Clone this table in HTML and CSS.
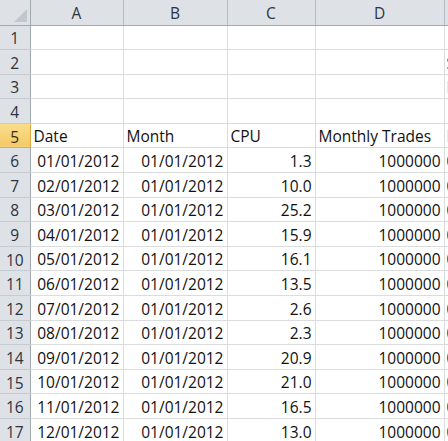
FILE: index.html
```html
<!DOCTYPE html>
<html>
<head>
<meta charset="utf-8">
<link rel="stylesheet" href="styles.css">
</head>
<body class="xl-page">
<table class="xl-sheet">
  <colgroup>
    <col class="xl-w0"><col class="xl-wa"><col class="xl-wb"><col class="xl-wc"><col class="xl-wd"><col class="xl-we">
  </colgroup>
  <thead>
    <tr class="xl-headrow">
      <th class="xl-corner"><span class="xl-tri"></span></th>
      <th class="xl-colhead">A</th>
      <th class="xl-colhead">B</th>
      <th class="xl-colhead">C</th>
      <th class="xl-colhead">D</th>
      <th class="xl-colhead"></th>
    </tr>
  </thead>
  <tbody>
    <tr><th class="xl-rowhead">1</th><td></td><td></td><td></td><td></td><td class="xl-e"></td></tr>
    <tr><th class="xl-rowhead">2</th><td></td><td></td><td></td><td></td><td class="xl-e">S</td></tr>
    <tr><th class="xl-rowhead">3</th><td></td><td></td><td></td><td></td><td class="xl-e">P</td></tr>
    <tr><th class="xl-rowhead">4</th><td></td><td></td><td></td><td></td><td class="xl-e"></td></tr>
    <tr><th class="xl-rowhead xl-sel">5</th><td class="xl-l">Date</td><td class="xl-l">Month</td><td class="xl-l">CPU</td><td class="xl-l">Monthly Trades</td><td class="xl-e">P</td></tr>
    <tr><th class="xl-rowhead">6</th><td>01/01/2012</td><td>01/01/2012</td><td>1.3</td><td>1000000</td><td class="xl-e">0</td></tr>
    <tr><th class="xl-rowhead">7</th><td>02/01/2012</td><td>01/01/2012</td><td>10.0</td><td>1000000</td><td class="xl-e">0</td></tr>
    <tr><th class="xl-rowhead">8</th><td>03/01/2012</td><td>01/01/2012</td><td>25.2</td><td>1000000</td><td class="xl-e">0</td></tr>
    <tr><th class="xl-rowhead">9</th><td>04/01/2012</td><td>01/01/2012</td><td>15.9</td><td>1000000</td><td class="xl-e">0</td></tr>
    <tr><th class="xl-rowhead">10</th><td>05/01/2012</td><td>01/01/2012</td><td>16.1</td><td>1000000</td><td class="xl-e">0</td></tr>
    <tr><th class="xl-rowhead">11</th><td>06/01/2012</td><td>01/01/2012</td><td>13.5</td><td>1000000</td><td class="xl-e">0</td></tr>
    <tr><th class="xl-rowhead">12</th><td>07/01/2012</td><td>01/01/2012</td><td>2.6</td><td>1000000</td><td class="xl-e">0</td></tr>
    <tr><th class="xl-rowhead">13</th><td>08/01/2012</td><td>01/01/2012</td><td>2.3</td><td>1000000</td><td class="xl-e">0</td></tr>
    <tr><th class="xl-rowhead">14</th><td>09/01/2012</td><td>01/01/2012</td><td>20.9</td><td>1000000</td><td class="xl-e">0</td></tr>
    <tr><th class="xl-rowhead">15</th><td>10/01/2012</td><td>01/01/2012</td><td>21.0</td><td>1000000</td><td class="xl-e">0</td></tr>
    <tr><th class="xl-rowhead">16</th><td>11/01/2012</td><td>01/01/2012</td><td>16.5</td><td>1000000</td><td class="xl-e">0</td></tr>
    <tr><th class="xl-rowhead">17</th><td>12/01/2012</td><td>01/01/2012</td><td>13.0</td><td>1000000</td><td class="xl-e">0</td></tr>
  </tbody>
</table>
</body>
</html>
```
FILE: styles.css
```css
html, body.xl-page {
  margin: 0;
  padding: 0;
  background-color: #ffffff;
  overflow: hidden;
}
.xl-sheet {
  border-collapse: collapse;
  table-layout: fixed;
  width: 453px;
  font-family: "Open Sans", "Liberation Sans", sans-serif;
  font-size: 15.5px;
  color: #111111;
}
.xl-w0 { width: 30px; }
.xl-wa { width: 93px; }
.xl-wb { width: 104px; }
.xl-wc { width: 88px; }
.xl-wd { width: 129px; }
.xl-we { width: 9px; }

.xl-sheet td,
.xl-sheet th {
  box-sizing: border-box;
  padding: 0 3px 1px 3px;
  border-right: 1px solid #dadcde;
  border-bottom: 1px solid #dadcde;
  overflow: hidden;
  white-space: nowrap;
  text-align: right;
  vertical-align: bottom;
  font-weight: normal;
  line-height: 20px;
}
.xl-sheet tbody tr {
  height: 24.6px;
}
.xl-headrow {
  height: 25px;
}
.xl-sheet th.xl-colhead,
.xl-sheet th.xl-corner,
.xl-sheet th.xl-rowhead {
  background: #dee2e7;
  color: #2c343e;
  text-align: center;
  vertical-align: middle;
  padding: 0;
}
.xl-sheet th.xl-colhead {
  border-right: 1px solid #b4bbc3;
  border-bottom: 1px solid #a0a8b0;
  padding-top: 1px;
}
.xl-sheet th.xl-corner {
  border-right: 1px solid #a0a8b0;
  border-bottom: 1px solid #a0a8b0;
  position: relative;
}
.xl-tri {
  position: absolute;
  right: 3px;
  bottom: 3px;
  width: 0;
  height: 0;
  border-left: 13px solid transparent;
  border-bottom: 13px solid #c2c7cd;
}
.xl-sheet th.xl-rowhead {
  border-right: 1px solid #a0a8b0;
  border-bottom: 1px solid #c6cbd1;
  padding-top: 2px;
}
.xl-sheet th.xl-sel {
  background: linear-gradient(#f9dd8c, #f4c965);
  border-bottom: 1px solid #e4a840;
  border-right: 1px solid #e4a840;
  color: #3a2f10;
}
.xl-sheet td.xl-l {
  text-align: left;
}
.xl-sheet td.xl-e {
  text-align: left;
  padding-left: 2px;
  padding-right: 0;
  border-right: none;
}
```
